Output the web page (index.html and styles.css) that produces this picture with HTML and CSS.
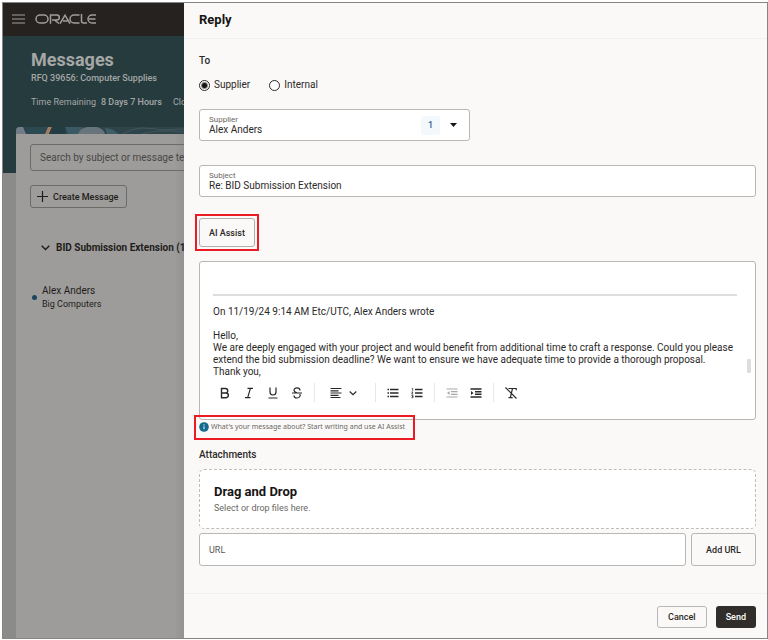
FILE: index.html
```
<!DOCTYPE html>
<html lang="en">
<head>
<meta charset="utf-8">
<meta name="viewport" content="width=device-width, initial-scale=1">
<title>Messages - Reply</title>
<link rel="stylesheet" href="styles.css">
</head>
<body>
<div class="window">
  <div class="page">
    <header class="topbar">
      <button class="menu" type="button" aria-label="Menu">
        <svg width="13" height="10" viewBox="0 0 13 10" fill="none" stroke="currentColor" stroke-width="1.2"><path d="M0 1h13M0 5h13M0 9h13"/></svg>
      </button>
      <svg class="logo" role="img" aria-label="Oracle" width="62" height="10" viewBox="0 0 62 10" fill="none" stroke="currentColor" stroke-width="1.5">
        <rect x="1" y="1" width="12" height="8" rx="4"/>
        <path d="M15.500 9.800V1h6.300a2.500 2.500 0 0 1 0 5H17M19.500 6l4.500 3.500"/>
        <path d="M25 9.700L30 1.200L35 9.700M28 7h4.500"/>
        <path d="M44.500 1H39a4 4 0 0 0 0 8h5.500M46.500 0v7a2 2 0 0 0 2 2H52M61 1H57a4 4 0 0 0 0 8h4M54 5h6.500"/>
      </svg>
    </header>
    <div class="hero">
      <h1>Messages</h1>
      <p class="rfq">RFQ 39656: Computer Supplies</p>
      <p class="meta"><span>Time Remaining</span><strong>8 Days 7 Hours</strong><span class="closes">Close</span></p>
    </div>
    <main class="card">
      <svg class="strip" viewBox="0 0 168 7" preserveAspectRatio="xMinYMin slice" aria-hidden="true">
        <rect width="168" height="7" fill="#2d444a"/>
        <path d="M0 0H7L10 7H0z" fill="#737d87"/>
        <path d="M10 0H31L29 7H12z" fill="#2b4952"/>
        <path d="M32 0h4l-3 7h-4z" fill="#a47c62"/>
        <path d="M36 0h13v7H33z" fill="#233b42"/>
        <path d="M49 0h18l-4 7H52z" fill="#3b5964"/>
        <path d="M62 7q3-7 10-7h9q7 2 8 7z" fill="#68747c"/>
        <path d="M89 1q8 0 13 6H91z" fill="#3f5d69"/>
        <path d="M107 7q9-6 19-6t20 2l22-1M126 7q16-5 42-2" fill="none" stroke="#45565b"/>
      </svg>
      <div class="card-body">
        <input class="search" type="text" aria-label="Search messages" placeholder="Search by subject or message text">
        <button class="create" type="button">
          <svg width="11" height="11" viewBox="0 0 11 11" fill="none" stroke="currentColor" stroke-width="1.200"><path d="M5.500 0v11M0 5.500h11"/></svg>
          Create Message
        </button>
        <h2 class="thread">
          <svg width="9" height="6" viewBox="0 0 9 6" fill="none" stroke="currentColor" stroke-width="1.400"><path d="M.7.8L4.500 4.600L8.300.8"/></svg>
          BID Submission Extension (1)
        </h2>
        <div class="sender">
          <span class="dot"></span>
          <div><p class="name">Alex Anders</p><p class="org">Big Computers</p></div>
        </div>
      </div>
    </main>
  </div>

  <form class="drawer">
    <header class="drawer-head"><h2>Reply</h2></header>
    <div class="drawer-body">
      <fieldset class="to">
        <legend>To</legend>
        <div class="radios">
          <label><input type="radio" name="to" checked>Supplier</label>
          <label><input type="radio" name="to">Internal</label>
        </div>
      </fieldset>
      <div class="field supplier">
        <div class="stack">
          <label for="supplier">Supplier</label>
          <select id="supplier"><option>Alex Anders</option></select>
        </div>
        <span class="count">1</span>
        <svg width="7" height="4" viewBox="0 0 7 4"><path d="M0 0h7L3.500 4z" fill="#161513"/></svg>
      </div>
      <div class="field subject">
        <div class="stack">
          <label for="subject">Subject</label>
          <input id="subject" type="text" value="Re: BID Submission Extension">
        </div>
      </div>
      <div class="assist-mark"><button class="assist" type="button">AI Assist</button></div>
      <div class="editor">
        <div class="message" role="textbox" aria-label="Message" contenteditable="true">
          <hr>
          <p class="quote">On 11/19/24 9:14 AM Etc/UTC, Alex Anders wrote</p>
          <p>Hello,<br>We are deeply engaged with your project and would benefit from additional time to craft a response. Could you please extend the bid submission deadline? We want to ensure we have adequate time to provide a thorough proposal.<br>Thank you,</p>
        </div>
        <div class="toolbar">
          <div class="tools">
            <button type="button" aria-label="Bold"><svg viewBox="0 0 12 12"><path d="M2.500 1.500H6.500a2.200 2.200 0 0 1 0 4.500H2.500zM2.500 6H7a2.300 2.300 0 0 1 0 4.700H2.500z" stroke-width="1.400"/></svg></button>
            <button type="button" aria-label="Italic"><svg viewBox="0 0 12 12"><path d="M4.500 1.300H10M2 10.700H7.500M7.400 1.300L4.700 10.700"/></svg></button>
            <button type="button" aria-label="Underline"><svg viewBox="0 0 12 12"><path d="M3 .5V5a3 3 0 0 0 6 0V.5M1.500 11h9"/></svg></button>
            <button type="button" aria-label="Strikethrough"><svg viewBox="0 0 12 12"><path d="M9 3.500C8.800 0 3 .3 3 3.200C3 5 4.500 5.300 6 5.900M1 6h10M8.800 7C10 9 8.300 11 6 11S3 9.800 3 8.500"/></svg></button>
          </div>
          <div class="tools align">
            <button type="button" aria-label="Align"><svg viewBox="0 0 12 12"><path d="M.5 1.500h11M.5 3.800h8M.5 6h11M.5 8.300h8M.5 10.500h10"/></svg></button>
            <button type="button" aria-label="Alignment options"><svg viewBox="0 0 12 12"><path d="M2.700 4.500L6 7.700L9.300 4.500"/></svg></button>
          </div>
          <div class="tools lists">
            <button type="button" aria-label="Bulleted list"><svg viewBox="0 0 12 12"><path d="M3 2.500h8.500M3 6h8.500M3 9.500h8.500M.5 2.500H2M.5 6H2M.5 9.500H2" stroke-width="1.400"/></svg></button>
            <button type="button" aria-label="Numbered list"><svg viewBox="0 0 12 12"><path d="M4 2.500h7.500M4 6h7.500M4 9.500h7.500" stroke-width="1.400"/><path d="M.8 1.500h.9v2.300M.5 5h1.400L.7 7h1.500M.5 8.400h1.500v2.300H.5M1 9.500h1" stroke-width=".8"/></svg></button>
          </div>
          <div class="tools indents">
            <button type="button" aria-label="Outdent" disabled><svg viewBox="0 0 12 12"><path d="M.5 2h11M5 4.700h6.500M5 7.300h6.500M.5 10h11"/><path d="M3.500 4L1 6l2.500 2z" fill="currentColor" stroke="none"/></svg></button>
            <button type="button" aria-label="Indent"><svg viewBox="0 0 12 12"><path d="M.5 2h11M5 4.700h6.500M5 7.300h6.500M.5 10h11" stroke-width="1.500"/><path d="M1 4l2.500 2L1 8z" fill="currentColor" stroke="none"/></svg></button>
          </div>
          <div class="tools clear">
            <button type="button" aria-label="Clear formatting"><svg viewBox="0 0 12 12"><path d="M.5.5l11 11M3.500 1.500h7.700v1.800M7.500 1.500L5.300 10.700M3.500 10.700h4.200"/></svg></button>
          </div>
        </div>
        <span class="thumb"></span>
      </div>
      <p class="hint">
        <svg width="10" height="10" viewBox="0 0 10 10"><circle cx="5" cy="5" r="4.800" fill="#12698f"/><path d="M5 4.300v3M5 2.300v1.200" stroke="#d7e7ee" stroke-width="1.100"/></svg>
        What's your message about? Start writing and use AI Assist
        <span class="hint-mark"></span>
      </p>
      <h3>Attachments</h3>
      <button class="drop" type="button"><strong>Drag and Drop</strong><span>Select or drop files here.</span></button>
      <div class="url-row">
        <input type="text" aria-label="URL" placeholder="URL">
        <button class="add" type="button">Add URL</button>
      </div>
    </div>
    <footer class="drawer-foot">
      <button class="cancel" type="button">Cancel</button>
      <button class="send" type="button">Send</button>
    </footer>
  </form>
</div>
</body>
</html>
```
FILE: styles.css
```
* { box-sizing: border-box; }
body {
  margin: 0;
  background: #fff;
  color: #2b2927;
  font: 10px/12px Roboto, "Noto Sans", sans-serif;
}
h1, h2, h3, p, fieldset, legend { margin: 0; padding: 0; border: 0; }
button, input, select { font: inherit; color: inherit; margin: 0; }
button { background: none; border: 0; padding: 0; }
svg { display: block; flex: none; }

.window {
  display: flex;
  min-height: calc(100vh - 3px);
  margin: 2px 0 1px 2px;
  border: 1px solid #858585;
}

/* Dimmed page behind the drawer */
.page {
  flex: 0 0 181px;
  min-width: 0;
  display: flex;
  flex-direction: column;
  overflow: hidden;
  white-space: nowrap;
  background: #8b8b89;
}
.topbar {
  display: flex;
  align-items: center;
  gap: 10px;
  height: 33px;
  padding: 0 9px 2px;
  background: #262220;
  color: #a09d9a;
}
.hero {
  height: 137px;
  padding: 12px 0 0 28px;
  background: #263b3e;
  color: #a5a7a6;
}
.hero h1 { font-size: 18px; line-height: 24px; }
.rfq { font-size: 9px; line-height: 12px; font-weight: 500; }
.meta { display: flex; gap: 5px; margin-top: 12px; font-size: 9px; }
.meta strong { font-weight: 500; }
.closes { margin-left: 6px; }
.card {
  position: relative;
  flex: 1;
  margin: -46px 0 0 13px;
  border-radius: 4px 0 0 0;
  overflow: hidden;
  background: linear-gradient(to left, #949391, #9d9c9a 10px);
  color: #1f1d1b;
}
.strip { width: 100%; height: 7px; }
.card-body {
  display: flex;
  flex-direction: column;
  align-items: flex-start;
  padding: 10px 0 0 14px;
}
.search {
  width: calc(100% + 20px);
  height: 27px;
  padding: 0 9px;
  border: 1px solid #6c6b69;
  border-radius: 3px;
  background: none;
}
.search::placeholder { color: #484644; opacity: 1; }
.create {
  display: flex;
  align-items: center;
  gap: 5px;
  height: 23px;
  margin-top: 14px;
  padding: 0 8px 0 6px;
  border: 1px solid #6c6b69;
  border-radius: 3px;
  font-size: 9px;
  font-weight: 500;
}
.thread {
  display: flex;
  align-items: center;
  gap: 6px;
  margin: 34px 0 0 11px;
  font-size: 10px;
  line-height: 12px;
}
.sender { display: flex; align-items: center; gap: 5px; margin: 30px 0 0 2px; }
.sender .name { line-height: 14px; }
.sender .org { font-size: 9px; line-height: 12px; }
.dot { width: 5px; height: 5px; border-radius: 50%; background: #1c4660; }

/* Reply drawer */
.drawer {
  flex: 1;
  min-width: 0;
  display: flex;
  flex-direction: column;
  background: #fbf9f8;
}
.drawer-head { height: 36px; padding: 9px 15px 0; border-bottom: 1px solid #f3f1ef; }
.drawer-head h2 { font-size: 13px; line-height: 16px; color: #161513; }
.drawer-body { flex: 1; padding: 16px 11px 0 15px; }
.to legend { font-weight: 500; line-height: 12px; }
.radios { display: flex; gap: 19px; margin-top: 12px; }
.radios label { display: flex; align-items: center; gap: 4px; }
.radios input {
  appearance: none;
  width: 11px;
  height: 11px;
  border: 1px solid #2b2927;
  border-radius: 50%;
  background: #fff;
}
.radios input:checked { background: radial-gradient(circle, #161513 2px, #fff 4px); }
.field {
  display: flex;
  align-items: center;
  height: 32px;
  padding: 0 10px 0 9px;
  border: 1px solid #b9b7b5;
  border-radius: 3px;
  background: #fff;
}
.stack { flex: 1; display: flex; flex-direction: column; padding-top: 1px; }
.stack label { font-size: 8px; line-height: 9px; color: #6b6865; }
.stack input, .stack select {
  appearance: none;
  width: 100%;
  height: 12px;
  padding: 0;
  border: 0;
  background: none;
}
.supplier { width: 271px; max-width: 100%; margin-top: 18px; padding-right: 12px; }
.count {
  width: 19px;
  margin-right: 10px;
  border-radius: 3px;
  background: #f3f8fc;
  color: #2f618c;
  font-size: 9px;
  line-height: 19px;
  font-weight: 500;
  text-align: center;
}
.subject { margin-top: 24px; }
.assist-mark {
  width: fit-content;
  margin: 17px 0 0 -4px;
  padding: 2px;
  border: 2px solid #ec1c24;
}
.assist {
  height: 29px;
  padding: 0 9px;
  border: 1px solid #b0aeac;
  border-radius: 3px;
  font-size: 9px;
  font-weight: 500;
}
.editor {
  position: relative;
  height: 159px;
  margin-top: 10px;
  padding: 32px 18px 0 13px;
  border: 1px solid #b9b7b5;
  border-radius: 3px;
  background: #fff;
}
.message { outline: 0; }
.message hr { height: 2px; margin: 0; border: 0; background: #dddddc; }
.quote { margin: 10px 0 12px; }
.toolbar { display: flex; align-items: center; height: 19px; margin-top: 5px; }
.tools { display: flex; align-items: center; gap: 12px; height: 19px; padding: 0 11px 0 6px; }
.tools + .tools { padding-left: 11px; border-left: 1px solid #e8e7e6; }
.tools.align { gap: 5px; padding-left: 15px; padding-right: 16px; }
.tools svg { width: 12px; height: 12px; fill: none; stroke: currentColor; stroke-width: 1.2; }
.tools button:disabled { color: #aaa8a6; }
.thumb {
  position: absolute;
  right: 4px;
  top: 97px;
  width: 4px;
  height: 14px;
  border-radius: 1px;
  background: #dddddc;
}
.hint {
  position: relative;
  display: flex;
  align-items: center;
  gap: 2px;
  width: fit-content;
  margin-top: 1px;
  font-family: "Noto Sans", sans-serif;
  font-size: 7px;
  line-height: 12px;
  color: #6b6865;
}
.hint-mark { position: absolute; inset: -6px -10px -7px -5px; border: 2px solid #ec1c24; }
.drawer-body h3 { margin-top: 15px; font-size: 10px; line-height: 14px; font-weight: 500; }
.drop {
  display: flex;
  flex-direction: column;
  justify-content: center;
  width: 100%;
  height: 60px;
  margin-top: 7px;
  padding: 0 14px;
  border: 1px dashed #bfbdbb;
  border-radius: 5px;
  background: #fff;
  text-align: left;
}
.drop strong { font-size: 13px; line-height: 18px; color: #161513; }
.drop span { font-size: 9px; line-height: 14px; color: #6b6865; }
.url-row { display: flex; gap: 5px; margin-top: 4px; }
.url-row input {
  flex: 1;
  min-width: 0;
  height: 33px;
  padding: 0 9px;
  border: 1px solid #b9b7b5;
  border-radius: 3px;
  background: #fff;
  font-size: 9px;
}
.url-row input::placeholder { color: #5b5855; opacity: 1; }
.add, .cancel {
  border: 1px solid #b9b7b5;
  border-radius: 3px;
  font-size: 9px;
  font-weight: 500;
}
.add { width: 65px; }
.drawer-foot {
  display: flex;
  justify-content: flex-end;
  gap: 9px;
  padding: 12px 11px 10px;
  border-top: 1px solid #f3f1ef;
}
.drawer-foot button { height: 22px; padding: 0 10px; border-radius: 3px; font-size: 9px; font-weight: 500; }
.send { background: #312d2a; color: #fff; }
```
